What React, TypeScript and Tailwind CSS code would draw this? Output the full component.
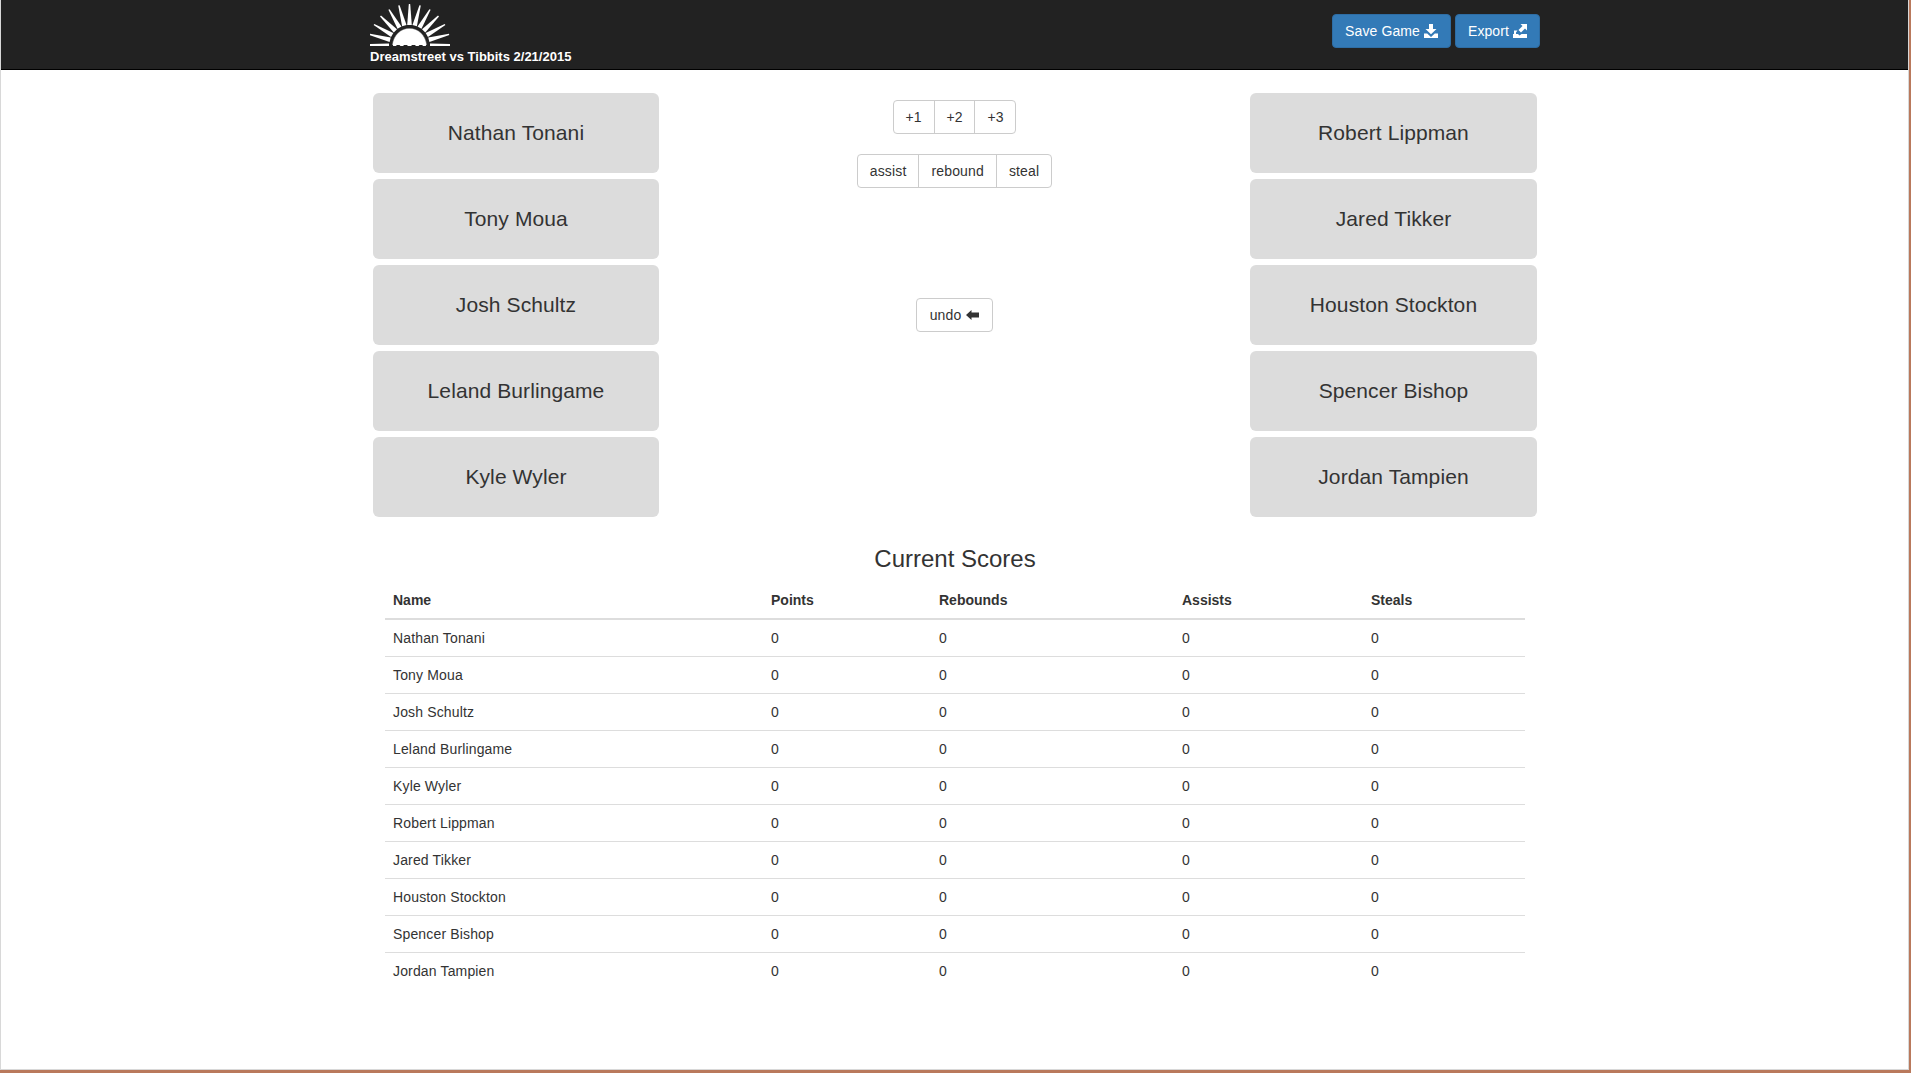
const left = ["Nathan Tonani", "Tony Moua", "Josh Schultz", "Leland Burlingame", "Kyle Wyler"];
const right = ["Robert Lippman", "Jared Tikker", "Houston Stockton", "Spencer Bishop", "Jordan Tampien"];
const rayAngles = [-75, -60, -45, -30, -15, 0, 15, 30, 45, 60, 75];

function Logo() {
  return (
    <svg width="80" height="42" viewBox="0 0 80 42" className="block">
      <g fill="#fff">
        {rayAngles.map((a) => (
          <polygon
            key={a}
            points="-2.300,-20 2.300,-20 0.700,-41 -0.700,-41"
            transform={`translate(39.500 41) rotate(${a})`}
          />
        ))}
        <path
          stroke="#999"
          strokeWidth="0.600"
          d="M22.500 41 C23.500 31 31 24.500 39.500 24.500 C48 24.500 55.500 31 56.500 41"
        />
        <path d="M23 42 C24 31 31 25 39.500 25 C48 25 55 31 56 42 L53 42 L51 39.500 L48.500 42 L46 42 L43.500 39.500 L41 42 L38 42 L35.500 39.500 L33 42 L30.500 42 L28 39.500 L26 42 Z" />
        <polygon points="0,40 19,39.500 19,42 0,42" />
        <polygon points="80,40 60,39.500 60,42 80,42" />
      </g>
    </svg>
  );
}

function DownloadIcon() {
  return (
    <svg width="14" height="14" viewBox="0 0 14 14" fill="currentColor">
      <path d="M5 0h4v5h3.500L7 10.200 1.500 5H5z" />
      <path d="M0 9.500h3.200L7 13l3.800-3.500H14V14H0z" />
    </svg>
  );
}

function ExportIcon() {
  return (
    <svg width="14" height="14" viewBox="0 0 14 14" fill="currentColor">
      <path d="M7.500 0H14v6.500l-2-2-4 4-2.500-2.500 4-4z" />
      <path d="M0 10h1V6.500h3.500L3 8.500V10h2l1.500 1.500L8.500 10H14v4H0z" />
    </svg>
  );
}

function ArrowLeftIcon() {
  return (
    <svg width="13" height="10" viewBox="0 0 13 10" fill="currentColor">
      <path d="M0 5 5.500 0v2.500H13v5H5.500V10z" />
    </svg>
  );
}

function PlayerColumn({ names }: { names: string[] }) {
  return (
    <div className="flex flex-col gap-[6px]">
      {names.map((n) => (
        <button
          key={n}
          className="h-[80px] rounded-md bg-[#dcdcdc] text-[21px] tracking-[0.1px] text-[#333]"
        >
          {n}
        </button>
      ))}
    </div>
  );
}

function ButtonGroup({ items }: { items: string[] }) {
  return (
    <div className="flex h-[34px] rounded border border-[#ccc] bg-white text-[#333]">
      {items.map((t, i) => (
        <span
          key={t}
          className={`flex items-center px-3 ${i > 0 ? "border-l border-[#ccc]" : ""}`}
        >
          {t}
        </span>
      ))}
    </div>
  );
}

export default function App() {
  const names = [...left, ...right];
  return (
    <div className="h-[1073px] w-[1911px] overflow-hidden bg-[#b9795c] pr-[2px] pb-[3px] font-['Liberation_Sans',Arial,sans-serif] text-[14px] text-[#333]">
      <div className="h-full border-r border-b border-l border-[#d8d8d8] bg-white">
        <header className="h-[70px] border-b border-black bg-[#222]">
          <div className="ml-[369px] flex h-full w-[1170px] items-start justify-between">
            <div className="pt-[4px]">
              <Logo />
              <div className="mt-[3px] text-[13px] leading-[15px] font-bold text-white">
                Dreamstreet vs Tibbits 2/21/2015
              </div>
            </div>
            <div className="flex gap-[4px] pt-[14px]">
              <button className="flex h-[34px] items-center gap-[4px] rounded border border-[#2e6da4] bg-[#337ab7] px-3 tracking-[0.1px] text-white">
                Save Game <DownloadIcon />
              </button>
              <button className="flex h-[34px] items-center gap-[4px] rounded border border-[#2e6da4] bg-[#337ab7] px-3 tracking-[0.1px] text-white">
                Export <ExportIcon />
              </button>
            </div>
          </div>
        </header>

        <main className="ml-[369px] w-[1170px]">
          <div className="grid grid-cols-[286px_1fr_287px] px-[3px] pt-[23px]">
            <PlayerColumn names={left} />
            <div className="flex flex-col items-center pt-[7px]">
              <ButtonGroup items={["+1", "+2", "+3"]} />
              <div className="mt-[20px] tracking-[0.15px]">
                <ButtonGroup items={["assist", "rebound", "steal"]} />
              </div>
              <button className="mt-[110px] flex h-[34px] items-center gap-[5px] rounded border border-[#ccc] bg-white px-[13px] tracking-[0.15px]">
                undo <ArrowLeftIcon />
              </button>
            </div>
            <PlayerColumn names={right} />
          </div>

          <h3 className="mt-[29px] text-center text-[24px] leading-[26px] text-[#333]">Current Scores</h3>

          <div className="mt-[8px] px-[15px]">
            <table className="w-full table-fixed border-collapse">
              <colgroup>
                <col className="w-[378px]" />
                <col className="w-[168px]" />
                <col className="w-[243px]" />
                <col className="w-[189px]" />
                <col />
              </colgroup>
              <thead>
                <tr className="border-b-2 border-[#ddd] text-left">
                  {["Name", "Points", "Rebounds", "Assists", "Steals"].map((h) => (
                    <th key={h} className="h-[39px] px-2 pt-[2px] font-bold">
                      {h}
                    </th>
                  ))}
                </tr>
              </thead>
              <tbody className="tracking-[0.15px]">
                {names.map((n, i) => (
                  <tr key={n} className={i > 0 ? "border-t border-[#ddd]" : ""}>
                    <td className="h-[37px] px-2 pt-[1px]">{n}</td>
                    <td className="px-2 pt-[1px]">0</td>
                    <td className="px-2 pt-[1px]">0</td>
                    <td className="px-2 pt-[1px]">0</td>
                    <td className="px-2 pt-[1px]">0</td>
                  </tr>
                ))}
              </tbody>
            </table>
          </div>
        </main>
      </div>
    </div>
  );
}
